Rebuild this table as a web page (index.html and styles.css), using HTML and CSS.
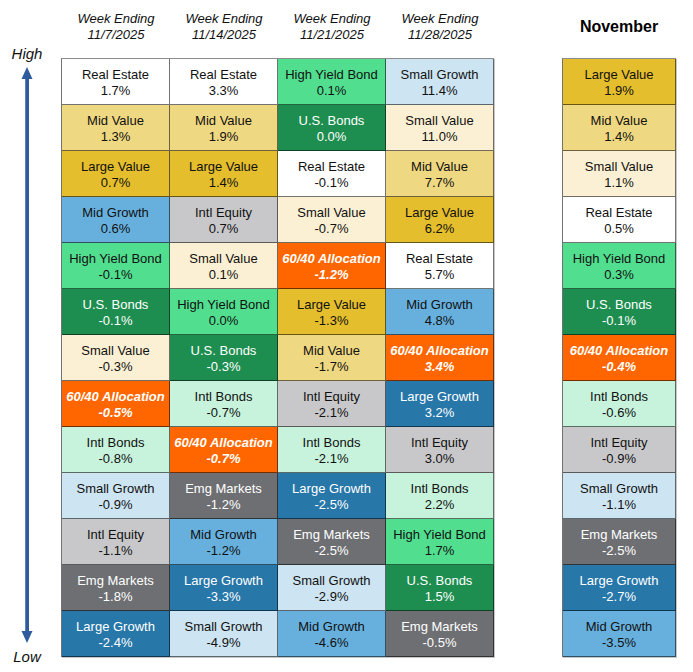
FILE: index.html
```html
<!DOCTYPE html>
<html>
<head>
<meta charset="utf-8">
<link rel="stylesheet" href="styles.css">
</head>
<body>
<div class="page">
  <div class="axis">
    <div class="axis-label">High</div>
    <svg class="arrow" width="54" height="586" viewBox="0 0 54 586">
      <line x1="27" y1="14" x2="27" y2="572" stroke="#2e5c9c" stroke-width="4"/>
      <line x1="25.5" y1="14" x2="25.5" y2="572" stroke="#5b80b8" stroke-width="1"/>
      <polygon points="27,5 21.5,17 32.5,17" fill="#2e5c9c"/>
      <polygon points="27,581 21.5,569 32.5,569" fill="#2e5c9c"/>
    </svg>
    <div class="axis-label">Low</div>
  </div>

  <div class="main">
    <div class="heads">
      <div class="head">Week Ending<br>11/7/2025</div>
      <div class="head">Week Ending<br>11/14/2025</div>
      <div class="head">Week Ending<br>11/21/2025</div>
      <div class="head">Week Ending<br>11/28/2025</div>
    </div>
    <div class="grid">
      <div class="cell re">Real Estate<br>1.7%</div>
      <div class="cell mv">Mid Value<br>1.3%</div>
      <div class="cell lv">Large Value<br>0.7%</div>
      <div class="cell mg">Mid Growth<br>0.6%</div>
      <div class="cell hy">High Yield Bond<br>-0.1%</div>
      <div class="cell ub">U.S. Bonds<br>-0.1%</div>
      <div class="cell sv">Small Value<br>-0.3%</div>
      <div class="cell al">60/40 Allocation<br>-0.5%</div>
      <div class="cell ib">Intl Bonds<br>-0.8%</div>
      <div class="cell sg">Small Growth<br>-0.9%</div>
      <div class="cell ie">Intl Equity<br>-1.1%</div>
      <div class="cell em">Emg Markets<br>-1.8%</div>
      <div class="cell lg">Large Growth<br>-2.4%</div>

      <div class="cell re">Real Estate<br>3.3%</div>
      <div class="cell mv">Mid Value<br>1.9%</div>
      <div class="cell lv">Large Value<br>1.4%</div>
      <div class="cell ie">Intl Equity<br>0.7%</div>
      <div class="cell sv">Small Value<br>0.1%</div>
      <div class="cell hy">High Yield Bond<br>0.0%</div>
      <div class="cell ub">U.S. Bonds<br>-0.3%</div>
      <div class="cell ib">Intl Bonds<br>-0.7%</div>
      <div class="cell al">60/40 Allocation<br>-0.7%</div>
      <div class="cell em">Emg Markets<br>-1.2%</div>
      <div class="cell mg">Mid Growth<br>-1.2%</div>
      <div class="cell lg">Large Growth<br>-3.3%</div>
      <div class="cell sg">Small Growth<br>-4.9%</div>

      <div class="cell hy">High Yield Bond<br>0.1%</div>
      <div class="cell ub">U.S. Bonds<br>0.0%</div>
      <div class="cell re">Real Estate<br>-0.1%</div>
      <div class="cell sv">Small Value<br>-0.7%</div>
      <div class="cell al">60/40 Allocation<br>-1.2%</div>
      <div class="cell lv">Large Value<br>-1.3%</div>
      <div class="cell mv">Mid Value<br>-1.7%</div>
      <div class="cell ie">Intl Equity<br>-2.1%</div>
      <div class="cell ib">Intl Bonds<br>-2.1%</div>
      <div class="cell lg">Large Growth<br>-2.5%</div>
      <div class="cell em">Emg Markets<br>-2.5%</div>
      <div class="cell sg">Small Growth<br>-2.9%</div>
      <div class="cell mg">Mid Growth<br>-4.6%</div>

      <div class="cell sg">Small Growth<br>11.4%</div>
      <div class="cell sv">Small Value<br>11.0%</div>
      <div class="cell mv">Mid Value<br>7.7%</div>
      <div class="cell lv">Large Value<br>6.2%</div>
      <div class="cell re">Real Estate<br>5.7%</div>
      <div class="cell mg">Mid Growth<br>4.8%</div>
      <div class="cell al">60/40 Allocation<br>3.4%</div>
      <div class="cell lg">Large Growth<br>3.2%</div>
      <div class="cell ie">Intl Equity<br>3.0%</div>
      <div class="cell ib">Intl Bonds<br>2.2%</div>
      <div class="cell hy">High Yield Bond<br>1.7%</div>
      <div class="cell ub">U.S. Bonds<br>1.5%</div>
      <div class="cell em">Emg Markets<br>-0.5%</div>
    </div>
  </div>

  <div class="month">
    <div class="month-head">November</div>
    <div class="grid single">
      <div class="cell lv">Large Value<br>1.9%</div>
      <div class="cell mv">Mid Value<br>1.4%</div>
      <div class="cell sv">Small Value<br>1.1%</div>
      <div class="cell re">Real Estate<br>0.5%</div>
      <div class="cell hy">High Yield Bond<br>0.3%</div>
      <div class="cell ub">U.S. Bonds<br>-0.1%</div>
      <div class="cell al">60/40 Allocation<br>-0.4%</div>
      <div class="cell ib">Intl Bonds<br>-0.6%</div>
      <div class="cell ie">Intl Equity<br>-0.9%</div>
      <div class="cell sg">Small Growth<br>-1.1%</div>
      <div class="cell em">Emg Markets<br>-2.5%</div>
      <div class="cell lg">Large Growth<br>-2.7%</div>
      <div class="cell mg">Mid Growth<br>-3.5%</div>
    </div>
  </div>
</div>
</body>
</html>
```

FILE: styles.css
```css
html, body {
  margin: 0;
  padding: 0;
  background: #ffffff;
}

body {
  font-family: "Liberation Sans", Arial, sans-serif;
  color: #111111;
  width: 693px;
  height: 672px;
  overflow: hidden;
}

.page {
  display: flex;
  align-items: flex-start;
}

.axis {
  width: 54px;
  margin-right: 7px;
  padding-top: 45px;
  display: flex;
  flex-direction: column;
  align-items: center;
}

.axis-label {
  font-style: italic;
  font-size: 15px;
  line-height: 17px;
  height: 17px;
  width: 54px;
  text-align: center;
}

.arrow {
  display: block;
  height: 586px;
}

.axis-label:last-child {
  line-height: 18px;
}

.main {
  display: flex;
  flex-direction: column;
}

.heads {
  display: flex;
  height: 59px;
  padding-left: 1px;
  box-sizing: border-box;
  padding-top: 11px;
}

.head {
  width: 108px;
  text-align: center;
  font-style: italic;
  font-size: 13px;
  line-height: 16px;
}

.grid {
  display: grid;
  grid-template-columns: repeat(4, 108px);
  grid-template-rows: repeat(13, 46px);
  grid-auto-flow: column;
  border-top: 1px solid rgba(0, 0, 0, 0.45);
  border-left: 1px solid rgba(0, 0, 0, 0.55);
  box-shadow: 1px 1px 0 rgba(0, 0, 0, 0.22);
  margin-top: -1px;
}

.grid.single {
  grid-template-columns: 113px;
}

.cell {
  box-sizing: border-box;
  border-right: 1px solid rgba(0, 0, 0, 0.55);
  border-bottom: 1px solid rgba(0, 0, 0, 0.55);
  padding-top: 2px;
  display: flex;
  align-items: center;
  justify-content: center;
  text-align: center;
  font-size: 13px;
  line-height: 16px;
  color: #111111;
}

.month {
  margin-left: 68px;
  display: flex;
  flex-direction: column;
}

.month-head {
  height: 59px;
  box-sizing: border-box;
  padding-top: 18px;
  text-align: center;
  font-weight: bold;
  font-size: 16px;
  line-height: 18px;
  color: #000000;
}

.re { background: #ffffff; }
.mv { background: #efd882; }
.lv { background: #e4be2c; }
.mg { background: #67b0dd; }
.ie { background: #c8c8ca; }
.hy { background: #52de8f; }
.ub { background: #1e8e50; color: #ffffff; }
.sv { background: #fbf0d3; }
.al { background: #ff6600; color: #ffffff; font-weight: bold; font-style: italic; }
.ib { background: #c7f2db; }
.sg { background: #cde4f2; }
.em { background: #6e6f72; color: #ffffff; }
.lg { background: #2777a9; color: #ffffff; }
```
